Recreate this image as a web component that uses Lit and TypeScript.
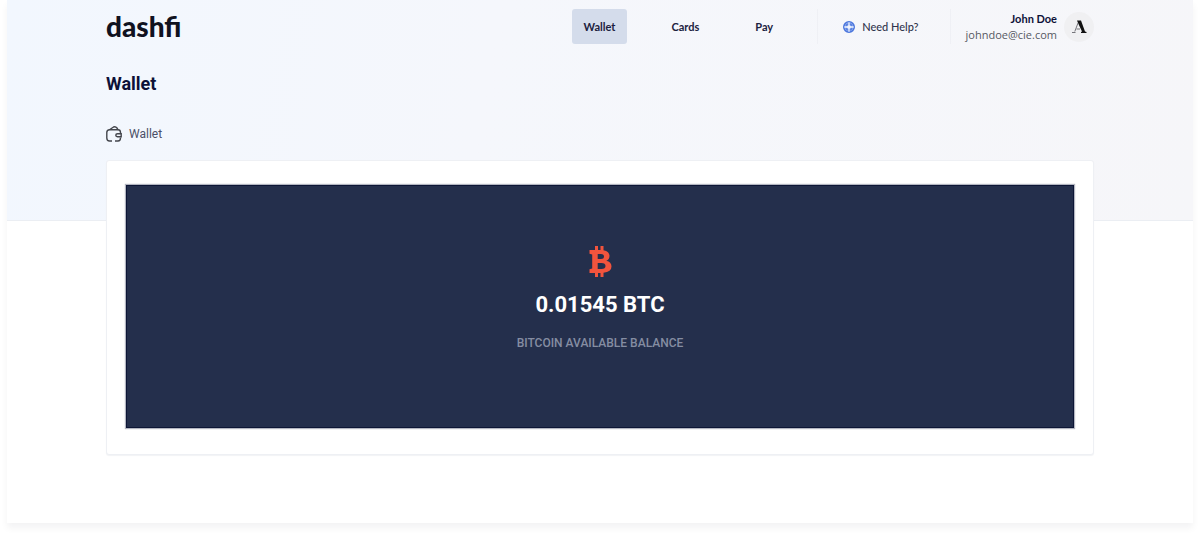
import { LitElement, html, css, svg } from "lit";
import { customElement, state } from "lit/decorators.js";
import { classMap } from "lit/directives/class-map.js";

const walletIcon = svg`
  <svg class="wallet-icon" viewBox="0 0 16 16" aria-hidden="true">
    <path d="M6 15H3.500Q.8 15 .8 12V6.500Q.8 3.800 3.500 3.800H12Q14.500 3.800 14.500 6.500V7" />
    <path d="M3.500 3.800 7.500 1Q9.500 .2 11 2L12 3.800" />
    <path d="M15.200 7.800H11.500Q9.800 7.800 9.800 9.200T11.500 10.700H15.200Z" />
    <path d="M14.500 11.500V12Q14.500 15 12 15H9" />
  </svg>`;

const helpIcon = svg`
  <svg class="help-icon" viewBox="0 0 12 12" aria-hidden="true">
    <circle cx="6" cy="6" r="5.200" fill="#c3d3f7" stroke="#4b76dd" stroke-width="1.600" />
    <circle cx="6" cy="6" r="3" fill="none" stroke="#5d84e2" stroke-width="1.800" />
    <path d="M6 1.500V10.500M1.500 6H10.500" stroke="#f4f7fe" stroke-width="1.300" />
  </svg>`;

const bitcoinIcon = svg`
  <svg class="bitcoin-icon" viewBox="0 0 23 31" aria-hidden="true">
    <path fill-rule="evenodd" d="M6 0H9V4H11.500V0H14.500V4.200Q20.500 5.200 20.500 10Q20.500 13.500 17.300 14.700Q22.500 16 22.500 20.500Q22.500 26 14.500 26.800V31H11.500V27H9V31H6V27H.5V23.200L3.200 22.500V8.500L.5 7.800V4H6ZM8.700 8V13H12Q15 13 15 10.500T12 8ZM8.700 17V23H12.500Q16.500 23 16.500 20T12.500 17Z" />
  </svg>`;

const avatarIcon = svg`
  <svg class="avatar-icon" viewBox="0 0 16 16" aria-hidden="true">
    <path d="M6 1.500H10L14 12.500 15.500 13V14H10V13L11 12.500 7 4Z" />
    <path d="M7 4 3.800 12.500M1 13.500H4.500M5.500 10H9" fill="none" stroke="#55565c" stroke-width=".8" />
  </svg>`;

@customElement("app-root")
export class AppRoot extends LitElement {
  @state() private section = "Wallet";

  static styles = css`
    :host {
      display: block;
      padding: 0 7px 14px;
      background: #fff;
      color: #0d1138;
      font-family: Roboto, "Liberation Sans", sans-serif;
    }
    * { box-sizing: border-box; }
    .page {
      padding-bottom: 68px;
      background: #fff;
      box-shadow: 0 5px 7px rgba(20, 20, 30, 0.05);
    }
    .hero {
      padding-bottom: 60px;
      border-bottom: 1px solid #ebeef3;
      background: linear-gradient(100deg, #f2f7fe 0%, #f5f7fc 40%, #f6f6f9 100%);
    }
    .container {
      width: 100%;
      max-width: 988px;
      margin: 0 auto;
    }
    .header {
      display: flex;
      align-items: center;
      padding-top: 9px;
    }
    .logo {
      margin-right: auto;
      color: #10121f;
      font: 900 28px/35px Lato, sans-serif;
      text-decoration: none;
    }
    .nav {
      display: flex;
      gap: 32px;
      margin-right: 32px;
    }
    .nav-link {
      padding: 0 12px;
      border-radius: 3px;
      color: #1c2140;
      font: 700 11px/35px Lato, sans-serif;
      text-decoration: none;
    }
    .active { background: #d4dceb; }
    .help {
      display: flex;
      align-items: center;
      gap: 7px;
      height: 35px;
      padding: 0 31px 0 25px;
      border: solid #eff0f5;
      border-width: 0 1px;
      color: #30344d;
      font: 500 11px/16px Lato, sans-serif;
      text-decoration: none;
    }
    .help-icon { width: 12px; height: 12px; }
    .user {
      display: flex;
      align-items: center;
      gap: 7px;
      padding-left: 15px;
    }
    .user-text {
      font: 400 11px/16px "Open Sans", sans-serif;
      text-align: right;
    }
    .user-name {
      font-family: Lato, sans-serif;
      font-weight: 700;
    }
    .email { color: #565963; }
    .avatar {
      display: grid;
      place-items: center;
      width: 30px;
      height: 30px;
      border-radius: 50%;
      background: #f0f0f2;
    }
    .avatar-icon { width: 16px; height: 16px; fill: #111; }
    .title {
      margin: 28px 0 0;
      font-size: 18px;
      font-weight: 700;
      line-height: 24px;
    }
    .tab {
      display: flex;
      align-items: center;
      gap: 7px;
      margin-top: 28px;
      padding: 0 0 16px;
      border: 0;
      background: none;
      color: #4b5068;
      font: 400 12px/20px Roboto, sans-serif;
    }
    .wallet-icon {
      width: 16px;
      height: 16px;
      fill: none;
      stroke: #44464c;
      stroke-width: 1.4;
    }
    .card {
      margin-top: -61px;
      padding: 24px 19px 26px;
      border: 1px solid #eef0f4;
      border-radius: 3px;
      background: #fff;
      box-shadow: 0 1px 1px rgba(40, 50, 80, 0.06);
    }
    .balance {
      display: flex;
      flex-direction: column;
      align-items: center;
      padding: 60px 16px 75px;
      border: 1px solid #0d1636;
      background: #242f4c;
      box-shadow: 0 0 1px 1px rgba(36, 47, 76, 0.35);
    }
    .bitcoin-icon { width: 23px; height: 31px; fill: #f2543d; }
    .amount {
      margin: 14px 0 0;
      color: #fff;
      font-size: 22px;
      font-weight: 700;
      line-height: 28px;
    }
    .caption {
      margin: 16px 0 0;
      color: #858da2;
      font-size: 12px;
      font-weight: 500;
      line-height: 17px;
    }
  `;

  private select(event: Event, name: string) {
    event.preventDefault();
    this.section = name;
  }

  render() {
    return html`
      <div class="page">
        <div class="hero">
          <div class="container">
            <header class="header">
              <a class="logo" href="#">dashfi</a>
              <nav class="nav">
                ${["Wallet", "Cards", "Pay"].map(
                  (name) => html`<a
                    href="#"
                    class=${classMap({ "nav-link": true, active: this.section === name })}
                    @click=${(event: Event) => this.select(event, name)}
                  >${name}</a>`
                )}
              </nav>
              <a class="help" href="#">${helpIcon}<span>Need Help?</span></a>
              <div class="user">
                <div class="user-text">
                  <div class="user-name">John Doe</div>
                  <div class="email">johndoe@cie.com</div>
                </div>
                <div class="avatar">${avatarIcon}</div>
              </div>
            </header>
            <h1 class="title">Wallet</h1>
            <button class="tab" type="button">${walletIcon}<span>Wallet</span></button>
          </div>
        </div>
        <main class="container card">
          <section class="balance">
            ${bitcoinIcon}
            <p class="amount">0.01545 BTC</p>
            <p class="caption">BITCOIN AVAILABLE BALANCE</p>
          </section>
        </main>
      </div>
    `;
  }
}
